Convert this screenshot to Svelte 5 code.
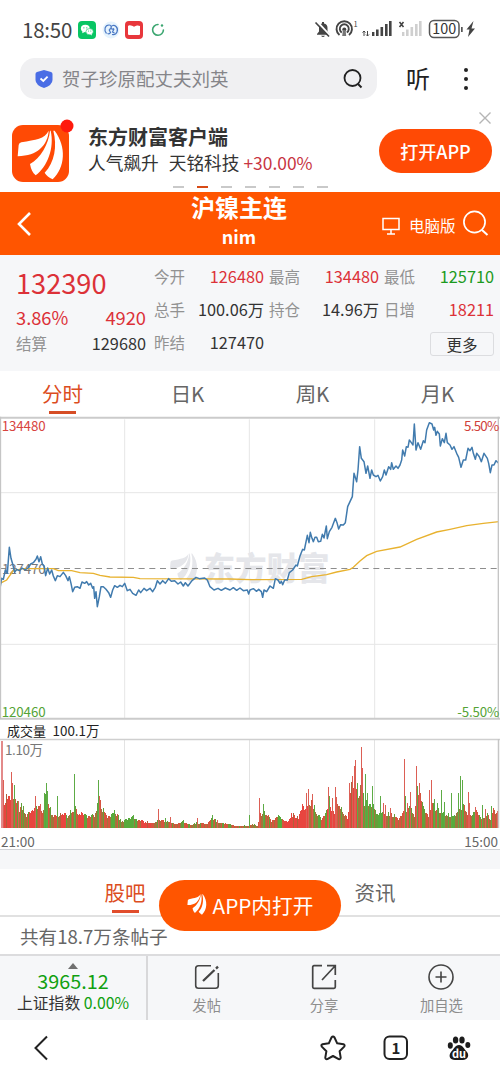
<script lang="ts">
    type Point = [number, number];

    // chart space is 1500 x 909, three units per pixel, starting at y = 18
    const price: Point[] = [
        [0, 535], [5, 505], [10, 508], [16, 480], [22, 490], [28, 412], [33, 445], [38, 462], [44, 487], [50, 478],
        [58, 482], [66, 474], [75, 480], [84, 474], [92, 462], [100, 458], [108, 448], [112, 438], [117, 455], [122, 440],
        [127, 462], [132, 468], [137, 497], [143, 474], [149, 492], [155, 480], [160, 498], [166, 512], [172, 497], [180, 500],
        [190, 487], [197, 497], [204, 512], [208, 500], [213, 520], [218, 545], [224, 532], [232, 530], [240, 535], [246, 516],
        [254, 520], [260, 515], [266, 525], [272, 520], [278, 535], [281, 530], [284, 565], [288, 545], [292, 590], [298, 560],
        [303, 530], [310, 530], [318, 538], [326, 548], [332, 562], [338, 540], [344, 527], [352, 532], [360, 526], [367, 530],
        [374, 520], [382, 542], [390, 538], [398, 550], [408, 556], [416, 540], [422, 548], [432, 535], [440, 542], [450, 535],
        [458, 545], [466, 532], [472, 512], [480, 522], [488, 512], [496, 520], [506, 506], [514, 514], [524, 512], [534, 522],
        [542, 516], [550, 528], [556, 518], [564, 528], [576, 512], [588, 502], [598, 506], [614, 504], [622, 510], [630, 530],
        [642, 540], [654, 535], [664, 541], [676, 534], [690, 540], [700, 533], [710, 541], [720, 534], [730, 542], [742, 540],
        [746, 552], [750, 540], [760, 536], [770, 544], [776, 538], [784, 545], [788, 562], [792, 540], [800, 545], [810, 528],
        [820, 535], [826, 506], [834, 510], [840, 520], [844, 514], [848, 524], [854, 510], [862, 510], [868, 488], [878, 480],
        [888, 465], [892, 468], [900, 438], [908, 418], [913, 420], [922, 376], [927, 398], [931, 367], [936, 385], [940, 395],
        [945, 382], [950, 382], [955, 395], [962, 394], [967, 373], [972, 384], [979, 348], [982, 386], [988, 365], [996, 352],
        [1006, 325], [1011, 338], [1016, 357], [1022, 344], [1030, 345], [1036, 338], [1043, 290], [1050, 275], [1057, 260], [1062, 190],
        [1070, 215], [1074, 180], [1079, 110], [1084, 145], [1092, 155], [1098, 190], [1103, 168], [1110, 205], [1115, 180], [1120, 195],
        [1128, 200], [1134, 196], [1141, 213], [1148, 200], [1153, 180], [1158, 195], [1166, 170], [1172, 178], [1175, 158], [1180, 178],
        [1188, 168], [1194, 175], [1200, 165], [1205, 150], [1208, 120], [1214, 138], [1219, 110], [1224, 112], [1228, 90], [1234, 98],
        [1239, 105], [1243, 42], [1248, 120], [1254, 98], [1262, 118], [1270, 92], [1275, 98], [1280, 60], [1288, 38], [1296, 42],
        [1301, 60], [1304, 52], [1308, 76], [1312, 64], [1318, 72], [1321, 108], [1327, 86], [1333, 98], [1338, 70], [1342, 98],
        [1350, 105], [1356, 118], [1362, 110], [1370, 130], [1376, 142], [1383, 172], [1390, 150], [1397, 150], [1404, 115], [1410, 122],
        [1416, 112], [1420, 130], [1426, 148], [1430, 130], [1438, 140], [1444, 155], [1452, 130], [1462, 145], [1466, 160], [1471, 188],
        [1476, 165], [1482, 165], [1488, 152], [1496, 160]
    ];

    const average: Point[] = [
        [0, 520], [20, 510], [40, 482], [70, 476], [160, 476], [175, 482], [215, 482], [240, 488], [280, 490], [300, 496],
        [330, 501], [400, 502], [420, 506], [690, 507], [750, 509], [905, 508], [935, 500], [980, 494], [1010, 486], [1050, 478],
        [1060, 472], [1080, 453], [1100, 437], [1130, 424], [1200, 411], [1250, 388], [1310, 366], [1350, 358], [1400, 347], [1450, 340], [1497, 335]
    ];

    // volume level over time, in pixels
    const level: Point[] = [
        [0, 48], [3, 30], [8, 34], [12, 36], [15, 27], [18, 20], [21, 24], [25, 14], [31, 18], [38, 24], [41, 16], [44, 34],
        [47, 28], [50, 15], [56, 12], [62, 17], [66, 13], [74, 22], [77, 14], [80, 17], [86, 11], [93, 14], [98, 32], [101, 20],
        [106, 12], [114, 17], [120, 7], [131, 11], [144, 6], [152, 5], [158, 9], [165, 7], [174, 4], [182, 6], [189, 3],
        [196, 5], [205, 4], [211, 10], [216, 6], [225, 4], [235, 2], [247, 2], [251, 4], [256, 2], [259, 16], [266, 15],
        [270, 7], [276, 13], [282, 8], [286, 6], [290, 15], [297, 10], [301, 26], [304, 20], [308, 28], [311, 28],
        [315, 17], [320, 9], [324, 14], [328, 24], [333, 17], [337, 28], [340, 20], [346, 10], [349, 42], [352, 48], [355, 40],
        [358, 38], [360, 65], [363, 28], [367, 27], [372, 26], [375, 13], [380, 17], [384, 14], [388, 16], [393, 13], [397, 9],
        [401, 16], [405, 20], [410, 20], [413, 14], [416, 40], [419, 36], [422, 20], [427, 14], [431, 26], [435, 20],
        [440, 17], [446, 14], [452, 12], [458, 22], [463, 24], [466, 14], [471, 13], [475, 18], [480, 9], [485, 15], [489, 10],
        [492, 20], [498, 13]
    ];

    const spikes: Record<number, [number, string]> = {
        0: [87, 'r'], 1: [87, 'r'], 2: [48, 'r'], 10: [56, 'r'], 11: [45, 'r'], 13: [43, 'g'], 17: [27, 'r'],
        34: [32, 'r'], 39: [24, 'r'], 43: [35, 'g'], 45: [45, 'g'], 46: [37, 'g'], 56: [32, 'g'], 73: [54, 'g'],
        97: [48, 'g'], 98: [32, 'r'], 132: [13, 'g'], 157: [19, 'r'], 164: [10, 'g'], 169: [11, 'r'], 182: [8, 'g'],
        196: [10, 'r'], 211: [13, 'g'], 216: [8, 'r'], 248: [13, 'g'], 258: [30, 'r'], 262: [24, 'g'],
        305: [35, 'r'], 307: [39, 'r'], 311: [34, 'r'], 327: [41, 'r'], 328: [32, 'g'], 331: [30, 'r'], 334: [41, 'r'],
        335: [31, 'r'], 348: [45, 'r'], 351: [52, 'r'], 353: [62, 'r'], 354: [68, 'r'], 356: [45, 'g'], 360: [81, 'r'],
        361: [60, 'r'], 364: [54, 'g'], 366: [35, 'g'], 371: [42, 'g'], 379: [32, 'g'], 382: [25, 'r'], 384: [23, 'r'],
        389: [20, 'r'], 403: [69, 'r'], 404: [32, 'g'], 406: [25, 'r'], 409: [36, 'r'], 415: [62, 'r'], 416: [42, 'g'],
        418: [45, 'r'], 428: [38, 'r'], 430: [48, 'r'], 433: [29, 'g'], 436: [25, 'g'], 440: [38, 'g'], 443: [26, 'g'],
        450: [35, 'g'], 457: [35, 'g'], 459: [52, 'g'], 461: [48, 'g'], 467: [36, 'r'], 468: [25, 'r'], 474: [21, 'r'],
        481: [23, 'g'], 484: [19, 'r'], 490: [22, 'g'], 496: [17, 'r']
    };

    // stretches where buying or selling clearly leads
    const redRuns: Point[] = [[3, 10], [28, 34], [59, 65], [77, 83], [140, 150], [283, 308], [326, 336], [346, 356]];
    const greenRuns: Point[] = [[43, 47], [65, 71], [109, 114], [120, 136], [276, 281], [312, 319], [361, 373], [377, 381], [441, 462]];

    const inside = (runs: Point[], x: number) => runs.some(([a, b]) => x >= a && x < b);

    function levelAt(x: number): number {
        const i = Math.max(1, level.findIndex(p => p[0] >= x));
        const [x0, y0] = level[i - 1];
        const [x1, y1] = level[i];
        return y0 + ((y1 - y0) * (x - x0)) / (x1 - x0);
    }

    const bars = Array.from({ length: 498 }, (_, x) => {
        const noise = ((x * 7919 + x * x * 131) % 97) / 97;
        const spike = spikes[x];
        let color = noise > 0.7 ? '#63a03a' : noise > 0.3 ? '#d6553f' : '#a4733c';
        if (inside(redRuns, x)) color = noise > 0.85 ? '#b0603c' : '#e8453f';
        if (inside(greenRuns, x)) color = noise < 0.3 ? '#9a7a3c' : '#57ab3c';
        if (spike) color = spike[0] > 80 && x < 2 ? '#e38a8a' : spike[1] === 'r' ? '#dc5f55' : '#5dab45';
        return { x, h: spike ? spike[0] : Math.max(1, levelAt(x) * (0.74 + noise * 0.34)), color };
    });

    const toLine = (points: Point[]) => points.map(p => p.join(',')).join(' ');

    const quotes = [
        { label: '今开', value: '126480', tone: 'up' },
        { label: '最高', value: '134480', tone: 'up' },
        { label: '最低', value: '125710', tone: 'down' },
        { label: '总手', value: '100.06万', tone: '' },
        { label: '持仓', value: '14.96万', tone: '' },
        { label: '日增', value: '18211', tone: 'up' },
        { label: '昨结', value: '127470', tone: '' }
    ];

    const tabs = ['分时', '日K', '周K', '月K'];
    let activeTab = 0;
</script>

{#snippet feathers()}
    <path d="M146 72C134 98 108 98 64 107Q57 109 56 115L53 149C84 148 105 141 119 128C137 112 145 92 146 72Z" />
    <path d="M150 72C146 112 122 154 90 172C93 188 98 198 107 206C142 180 164 124 152 72Z" />
    <path d="M160 72C172 118 164 168 134 198C139 206 147 213 158 218C196 182 200 120 164 72Z" />
{/snippet}

<div class="page">
    <header class="status">
        <span class="clock">18:50</span>
        <svg class="app" viewBox="0 0 18 18"><rect width="18" height="18" rx="4" fill="#08c563" /><ellipse cx="7.3" cy="7.5" rx="4.4" ry="3.7" fill="#fff" /><ellipse cx="11.6" cy="10.7" rx="3.7" ry="3.1" fill="#fff" stroke="#08c563" stroke-width=".6" /><path d="M4.6 10l-.4 2.2 2-1M13.5 13l.5 1.4-2-.9" fill="#fff" /><g fill="#08c563"><circle cx="5.9" cy="6.8" r=".6" /><circle cx="8.8" cy="6.8" r=".6" /><circle cx="10.5" cy="10" r=".5" /><circle cx="12.8" cy="10" r=".5" /></g></svg>
        <svg class="app" viewBox="0 0 18 18"><circle cx="9" cy="9" r="8.5" fill="#e6f3fd" /><g fill="none" stroke="#4a78c4" stroke-width="1.200"><path d="M4.500 12.500C1.500 9 3 4 7 4c3 0 3 4 0 4.500M7 8.500l1.500 3q-1 2-3 1M10 13.500c5 1 7-5 4-8-2-2-5-1-5 1s2 2 3 1M12 8l-1.500 3 2 1" /></g></svg>
        <svg class="app" viewBox="0 0 18 18"><rect width="18" height="18" rx="4" fill="#e8373c" /><path d="M3 5q1-1 3-.5T9 5.800Q10.500 4.800 12 4.500t3 .5v8q0 1-1 1H4q-1 0-1-1z" fill="#fff" /></svg>
        <svg class="app" viewBox="0 0 18 18"><path d="M9 3.500A5.400 5.400 0 1 0 14.400 9" fill="none" stroke="#3ba670" stroke-width="1.600" stroke-linecap="round" /><circle cx="13" cy="4.500" r="1.200" fill="#3ba670" /></svg>
        <svg class="signals" viewBox="0 0 166 24">
            <g fill="#444">
                <path d="M3 16l2-2.500V10q0-4 3-4.500V4h2v1.500q3.500.8 3.500 4.500v3.500l2 2.500v.8H3zM7 17.800h4q-2 2.500-4 0" />
                <path d="M3 3.500l13 14" stroke="#fff" stroke-width="2" /><path d="M1.500 4.500l13.500 14" stroke="#444" stroke-width="1.700" />
            </g>
            <g fill="none" stroke="#444" stroke-width="1.900"><path d="M25.500 17a7.700 7.700 0 1 1 9.500 0M27.800 14.500a4.500 4.500 0 1 1 5 0" /></g>
            <circle cx="30.300" cy="11.500" r="2" fill="#444" /><path d="M29 12h2.600l.6 6h-4z" fill="#777" />
            <text x="39.500" y="8.500" font-size="7.500" fill="#444">1</text>
            <path d="M50 13v5m-1.500-3.500L50 13l1.500 1.500M53.500 18v-5m-1.500 3.500l1.500 1.500 1.500-1.500" stroke="#444" fill="none" />
            <g fill="#444"><rect x="58" y="14" width="2.400" height="4" /><rect x="62" y="11.500" width="2.600" height="6.500" /><rect x="66.500" y="9" width="2.600" height="9" /><rect x="71" y="6" width="2.600" height="12" /><rect x="75" y="3" width="2.600" height="15" /></g>
            <path d="M85.500 4l4 5m0-5l-4 5" stroke="#444" stroke-width="1.600" />
            <g fill="#cfcfcf"><rect x="88" y="14" width="2.400" height="4" /><rect x="92" y="11.500" width="2.600" height="6.500" /><rect x="96.500" y="9" width="2.600" height="9" /><rect x="101" y="6" width="2.600" height="12" /><rect x="105" y="3" width="2.600" height="15" /></g>
            <rect x="115.500" y="2.500" width="29.500" height="17" rx="4.500" fill="none" stroke="#555" stroke-width="1.500" />
            <text x="130.300" y="16.300" font-size="14.500" text-anchor="middle" fill="#333" textLength="24" lengthAdjust="spacingAndGlyphs">100</text>
            <rect x="147" y="9" width="1.700" height="5" fill="#555" />
            <path d="M159.500 3l-7 8.500h3L154 19l7-8.500h-3.500z" fill="#444" />
        </svg>
    </header>

    <div class="search-row">
        <div class="search">
            <svg width="18" height="20" viewBox="0 0 18 20"><path d="M9 1l7 2q1.500.4 1.500 2v6q0 5-8.500 8Q.5 16 .5 11V5q0-1.600 1.500-2z" fill="#4a6de5" /><path d="M5.500 9.500L8.300 12l4.300-4.300" fill="none" stroke="#fff" stroke-width="1.800" /></svg>
            <span>贺子珍原配丈夫刘英</span>
            <svg width="22" height="22" viewBox="0 0 22 22"><circle cx="10.500" cy="10" r="8" fill="none" stroke="#222" stroke-width="1.800" /><path d="M16 16l3.500 3.500" stroke="#222" stroke-width="2" /></svg>
        </div>
        <span class="listen">听</span>
        <svg class="dots" width="6" height="24" viewBox="0 0 6 24"><circle cx="3" cy="3" r="2" /><circle cx="3" cy="12" r="2" /><circle cx="3" cy="21" r="2" /></svg>
    </div>

    <section class="banner">
        <svg class="logo" width="64" height="66" viewBox="0 0 64 66">
            <rect x="1" y="9" width="57" height="57" rx="11" fill="#ff4a05" />
            <g fill="#fff" transform="translate(-11 -11) scale(.3333) translate(0 5)">{@render feathers()}</g>
            <circle cx="56" cy="10" r="6.500" fill="#fe1a0d" />
        </svg>
        <div class="banner-text">
            <strong>东方财富客户端</strong>
            <p>人气飙升 <span>天铭科技</span> <em>+30.00%</em></p>
        </div>
        <button class="open-app">打开APP</button>
        <svg class="close" width="14" height="14" viewBox="0 0 14 14"><path d="M1.500 1.500l11 11m0-11l-11 11" stroke="#b5b5b5" stroke-width="1.400" /></svg>
        <div class="pager">
            {#each Array(7) as _, i}
                <i class:current={i === 1}></i>
            {/each}
        </div>
    </section>

    <section class="title-bar">
        <svg width="16" height="26" viewBox="0 0 16 26"><path d="M14 2L3 13l11 11" fill="none" stroke="#fff" stroke-width="2.600" /></svg>
        <div class="title">
            <h1>沪镍主连</h1>
            <span>nim</span>
        </div>
        <div class="title-tools">
            <svg width="18" height="18" viewBox="0 0 18 18"><path d="M1 1.500h16v11H1zM9 13v3.500M5 17h8" fill="none" stroke="#fff" stroke-width="1.500" /></svg>
            <span>电脑版</span>
            <svg width="27" height="27" viewBox="0 0 27 27"><circle cx="12.500" cy="12" r="10.600" fill="none" stroke="#fff" stroke-width="1.700" /><path d="M20 20l5.500 5" stroke="#fff" stroke-width="2" /></svg>
        </div>
    </section>

    <section class="quote">
        <div class="main-quote">
            <div class="last up">132390</div>
            <div class="pair change up"><span>3.86%</span><span>4920</span></div>
            <div class="pair"><label>结算</label><span>129680</span></div>
        </div>
        <div class="quote-grid">
            {#each quotes as q}
                <div class="pair"><label>{q.label}</label><span class={q.tone}>{q.value}</span></div>
            {/each}
            <button class="more">更多</button>
        </div>
    </section>

    <nav class="tabs">
        {#each tabs as tab, i}
            <span class:active={i === activeTab}>{tab}</span>
        {/each}
    </nav>

    <svg class="chart" width="500" height="303" viewBox="0 18 1500 909">
        <g fill="none" stroke="#e6e6e6" stroke-width="3">
            <path d="M0 248H1490M0 703H1490M374 28V925M748 28V925M1124 28V925" />
        </g>
        <g fill="#e5e6ea">
            <g transform="translate(478 387) scale(.6)">{@render feathers()}</g>
            <text class="watermark" x="611" y="510" textLength="378">东方财富</text>
        </g>
        <path d="M0 475.500H1490" stroke="#8d8d8d" stroke-width="3" stroke-dasharray="18 14" />
        <text x="6" y="491" textLength="131" fill="#777">127470</text>
        <polyline points={toLine(average)} fill="none" stroke="#e8b22f" stroke-width="4" />
        <polyline points={toLine(price)} fill="none" stroke="#417bae" stroke-width="4.500" stroke-linejoin="round" />
        <path d="M0 23.500H1500M0 926H1500" stroke="#cbcbcb" stroke-width="6" />
        <path d="M1.500 20V927M1495 20V927" stroke="#c5c5c5" stroke-width="4" />
        <text x="5" y="64" textLength="132" fill="#d8453f">134480</text>
        <text x="1498" y="64" textLength="106" text-anchor="end" fill="#d0413b">5.50%</text>
        <text x="5" y="921" textLength="132" fill="#54a336">120460</text>
        <text x="1498" y="921" textLength="126" text-anchor="end" fill="#54a336">-5.50%</text>
    </svg>

    <div class="volume-title">成交量&ensp;<span>100.1万</span></div>
    <svg class="volume" width="500" height="90" viewBox="0 0 500 90">
        <path d="M124.500 1V88M249.500 1V88M374.500 1V88" stroke="#e3e3e3" />
        <g shape-rendering="crispEdges">
            {#each bars as bar}
                <rect x={bar.x + 1} y={88.5 - bar.h} width="1" height={bar.h} fill={bar.color} />
            {/each}
        </g>
        <path d="M0 .5H500" stroke="#cfcfcf" stroke-width="1.500" />
        <path d="M498.500 0V89" stroke="#c5c5c5" stroke-width="1.500" />
        <text x="5" y="16" textLength="38">1.10万</text>
    </svg>
    <div class="times"><span>21:00</span><span>15:00</span></div>

    <section class="forum">
        <div class="forum-tabs">
            <span class="active">股吧</span>
            <span>资讯</span>
        </div>
        <button class="float-app">
            <svg width="20" height="21" viewBox="50 70 144 150" fill="#fff">{@render feathers()}</svg>
            APP内打开
        </button>
        <p>共有18.7万条帖子</p>
    </section>

    <footer class="actions">
        <div class="index">
            <i></i>
            <b>3965.12</b>
            <div>上证指数 <span>0.00%</span></div>
        </div>
        <div class="action">
            <svg width="26" height="26" viewBox="0 0 26 26" fill="none" stroke="#444" stroke-width="1.600"><path d="M17 1.700H4.500Q1.700 1.700 1.700 4.500v17q0 2.800 2.800 2.800h17q2.800 0 2.800-2.800V9" /><path d="M9 17L20.500 6M22 4.600l2-2" stroke-width="2.300" /></svg>
            <span>发帖</span>
        </div>
        <div class="action">
            <svg width="26" height="26" viewBox="0 0 26 26" fill="none" stroke="#444" stroke-width="1.700"><path d="M11 1.700H3Q1.700 1.700 1.700 3v20q0 1.300 1.300 1.300h20q1.300 0 1.300-1.300v-7M11 16L24 2M16 1.700h8.300V11" /></svg>
            <span>分享</span>
        </div>
        <div class="action">
            <svg width="26" height="26" viewBox="0 0 26 26" fill="none" stroke="#444" stroke-width="1.600"><circle cx="13" cy="13" r="12" /><path d="M13 7.500v11M7.500 13h11" /></svg>
            <span>加自选</span>
        </div>
    </footer>

    <nav class="browser">
        <svg class="back" width="16" height="26" viewBox="0 0 16 26" fill="none" stroke="#222" stroke-width="2"><path d="M14 1.500L2.500 13 14 24.500" /></svg>
        <svg width="26" height="26" viewBox="0 0 26 26" fill="none" stroke="#222" stroke-width="2" stroke-linejoin="round"><path d="M11.500 2.500q1.500-1.800 3 0l2.700 5.800 6.300.9q1.800.8.700 2.400l-4.600 4.600 1.100 6.500q-.3 2-2 1.400L13 21l-5.700 3.100q-1.800.5-2-1.400l1.100-6.500-4.600-4.600q-1.100-1.700.7-2.400l6.300-.9z" /></svg>
        <svg width="26" height="26" viewBox="0 0 26 26"><rect x="1.500" y="1.500" width="22.500" height="22.500" rx="5" fill="none" stroke="#222" stroke-width="2" /><text x="13" y="18.500" text-anchor="middle" font-size="15" font-weight="700" fill="#222">1</text></svg>
        <svg width="26" height="26" viewBox="0 0 26 26" fill="#1c1c1c"><ellipse cx="4.300" cy="10.500" rx="2.500" ry="3.200" /><ellipse cx="9.600" cy="5" rx="2.700" ry="3.500" /><ellipse cx="16" cy="5" rx="2.700" ry="3.500" /><ellipse cx="21.800" cy="10" rx="2.500" ry="3" /><path d="M13 10c4 0 5 4 8 7 3 4 0 8-4 8H9c-5 0-7-4-4-8 3-3 4-7 8-7z" /><text x="13" y="22.500" text-anchor="middle" font-size="11" font-weight="700" fill="#fff">du</text></svg>
    </nav>
</div>

<style>
    :global(body) {
        background: #fff;
    }

    .page {
        width: 500px;
        height: 1076px;
        overflow: hidden;
        display: flex;
        flex-direction: column;
        font-family: "Noto Sans CJK SC", sans-serif;
        color: #333;
    }

    .page > * {
        flex: none;
        box-sizing: border-box;
    }

    svg {
        display: block;
        flex: none;
        overflow: visible;
    }

    button {
        padding: 0;
        border: 0;
        font-family: inherit;
    }

    p, h1 {
        margin: 0;
    }

    .status {
        height: 58px;
        padding: 2px 20px 0 22px;
        display: flex;
        align-items: center;
    }

    .clock {
        width: 56px;
        margin-top: -3px;
        font-size: 20.5px;
        letter-spacing: -.2px;
        color: #444;
    }

    .app {
        width: 18px;
        height: 18px;
        margin-right: 5.500px;
    }

    .signals {
        width: 166px;
        height: 24px;
        margin-left: auto;
    }

    .search-row {
        height: 41px;
        padding-left: 20px;
        display: flex;
        align-items: center;
    }

    .search {
        box-sizing: border-box;
        width: 357px;
        height: 41px;
        padding: 0 13px 0 15px;
        display: flex;
        align-items: center;
        border-radius: 15px;
        background: #f0f0f2;
        color: #858589;
        font-size: 18.500px;
    }

    .search span {
        flex: 1;
        margin: -1px 0 0 9px;
    }

    .listen {
        margin: -2px 0 0 29px;
        font-size: 24px;
        color: #222;
    }

    .dots {
        margin-left: 33px;
        fill: #222;
    }

    .banner {
        position: relative;
        height: 93px;
        padding: 17px 8px 0 11px;
        display: flex;
        align-items: flex-start;
    }

    .banner-text {
        flex: 1;
        margin-left: 13px;
        padding-top: 7px;
        white-space: nowrap;
    }

    .banner-text strong {
        display: block;
        font-size: 20px;
        line-height: 27px;
    }

    .banner-text p {
        font-size: 17.700px;
        line-height: 25px;
    }

    .banner-text span {
        margin-left: 6px;
    }

    .banner-text em {
        font-style: normal;
        color: #c83542;
        font-size: 17.400px;
    }

    .open-app {
        width: 113px;
        height: 44px;
        margin-top: 13px;
        border-radius: 22px;
        background: #ff4a05;
        color: #fff;
        font-size: 18px;
        font-weight: 500;
    }

    .close {
        position: absolute;
        top: 12px;
        right: 8px;
    }

    .pager {
        position: absolute;
        bottom: 4px;
        left: 173px;
        display: flex;
        gap: 13px;
    }

    .pager i {
        width: 11px;
        height: 2px;
        background: #c9c9c9;
    }

    .pager .current {
        background: #d84b16;
    }

    .title-bar {
        height: 63px;
        padding: 0 10px 0 16px;
        display: grid;
        grid-template-columns: 80px 1fr 108px;
        align-items: center;
        background: #ff5500;
        color: #fff;
    }

    .title {
        margin-top: -4px;
        text-align: center;
    }

    h1 {
        font-size: 24px;
        line-height: 30px;
    }

    .title span {
        font-size: 18px;
        font-weight: 700;
        line-height: 29px;
        display: block;
    }

    .title-tools {
        display: flex;
        align-items: center;
        font-size: 15.500px;
    }

    .title-tools span {
        margin: 3px 6px 0 9px;
        white-space: nowrap;
    }

    .title-tools svg:first-child {
        margin-top: 5px;
    }

    .quote {
        height: 116px;
        padding: 5px 6px 0 16px;
        display: flex;
        gap: 8px;
        background: #f6f7f9;
        font-size: 16.300px;
    }

    .main-quote {
        width: 130px;
    }

    .last {
        font-size: 27.200px;
        line-height: 44px;
    }

    .pair {
        display: flex;
        align-items: center;
        justify-content: space-between;
        line-height: 33px;
        height: 33px;
    }

    .pair label {
        font-size: 15.500px;
        color: #929292;
    }

    .main-quote .pair {
        height: 27px;
        line-height: 27px;
    }

    .main-quote .change {
        height: 26px;
        font-size: 18.300px;
    }

    .quote-grid {
        flex: 1;
        display: grid;
        grid-template-columns: repeat(3, 110px);
        grid-auto-rows: 33px;
        column-gap: 5px;
    }

    .up {
        color: #dc3138;
    }

    .down {
        color: #1b9a20;
    }

    .more {
        grid-column: 3;
        width: 64px;
        height: 24px;
        margin-top: 2px;
        justify-self: end;
        align-self: center;
        border: 1px solid #dcdde0;
        border-radius: 3px;
        background: #f6f7f9;
        color: #333;
        font-size: 15.500px;
        line-height: 20px;
    }

    .tabs {
        height: 45px;
        display: flex;
    }

    .tabs span {
        flex: 1;
        display: flex;
        flex-direction: column;
        align-items: center;
        font-size: 20.500px;
        line-height: 40px;
        padding-top: 2px;
        color: #666;
    }

    .tabs .active, .forum-tabs .active {
        color: #dc4d1e;
    }

    .tabs .active::after {
        content: '';
        width: 27px;
        height: 3px;
        margin-top: -2px;
        background: #d64d25;
    }

    .chart text {
        font-size: 40px;
    }

    .chart .watermark {
        font-size: 94px;
        font-weight: 900;
    }

    .volume-title {
        height: 20px;
        padding-left: 7px;
        font-size: 13px;
        line-height: 22px;
        color: #222;
    }

    .volume-title span {
        font-size: 13.400px;
    }

    .volume text {
        font-size: 13.500px;
        fill: #777;
    }

    .times {
        height: 21px;
        padding: 0 2px 0 1px;
        display: flex;
        justify-content: space-between;
        border-bottom: 1px solid #d0d2d6;
        font-size: 13.500px;
        line-height: 24px;
        color: #666;
    }

    .forum {
        position: relative;
        height: 104px;
        border-top: 19px solid #f6f7f9;
    }

    .forum-tabs {
        height: 48px;
        box-sizing: border-box;
        display: flex;
        justify-content: space-around;
        border-bottom: 2px solid #e1e1e1;
        color: #666;
        font-size: 20.500px;
        line-height: 46px;
    }

    .forum-tabs .active::after {
        content: '';
        display: block;
        width: 27px;
        height: 3px;
        margin: -5px auto 0;
        background: #e14d2c;
    }

    .float-app {
        position: absolute;
        top: 11px;
        left: 159px;
        width: 182px;
        height: 51px;
        padding-bottom: 2px;
        display: flex;
        align-items: center;
        justify-content: center;
        gap: 6px;
        border-radius: 26px;
        background: #ff5500;
        color: #fff;
        font-size: 20.700px;
    }

    .forum p {
        padding-left: 20px;
        font-size: 18.600px;
        line-height: 38px;
        color: #666;
    }

    .actions {
        height: 66px;
        border-top: 2px solid #dcdcde;
        display: flex;
        background: #f6f7f9;
    }

    .index {
        box-sizing: border-box;
        width: 148px;
        padding-top: 7px;
        border-right: 2px solid #d8d8da;
        display: flex;
        flex-direction: column;
        align-items: center;
        font-size: 15.800px;
        line-height: 20px;
        white-space: nowrap;
    }

    .index i {
        border: 5px solid transparent;
        border-top: 0;
        border-bottom: 6px solid #707070;
    }

    .index b {
        font-size: 19.800px;
        font-weight: 400;
        line-height: 24px;
    }

    .index b, .index span {
        color: #10a010;
    }

    .action {
        flex: 1;
        padding-top: 8px;
        display: flex;
        flex-direction: column;
        align-items: center;
        color: #8d8d8d;
        font-size: 14.300px;
        line-height: 30px;
    }

    .browser {
        height: 57px;
        padding: 0 28px 2px 33px;
        display: flex;
        align-items: center;
        gap: 37px;
    }

    .back {
        margin-right: auto;
    }
</style>
